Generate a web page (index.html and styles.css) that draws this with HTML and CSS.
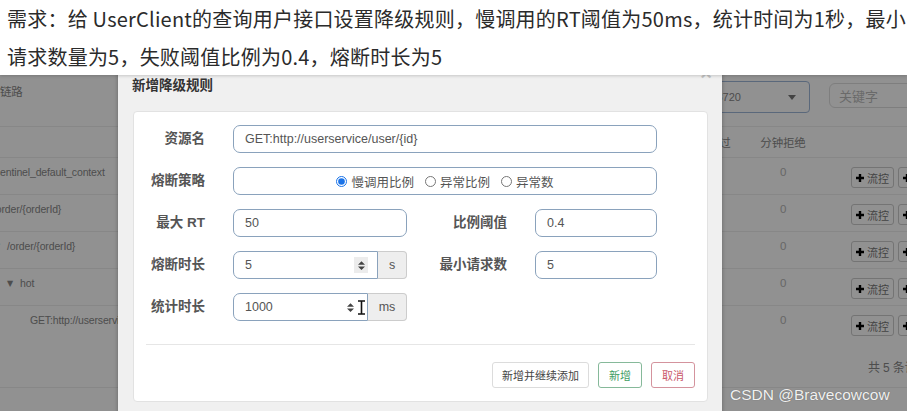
FILE: index.html
```html
<!DOCTYPE html>
<html lang="zh-CN">
<head>
    <meta charset="UTF-8">
    <meta name="viewport" content="width=device-width, initial-scale=1.0">
    <title>新增降级规则</title>
    <link rel="stylesheet" href="styles.css">
</head>
<body>
    <div class="note">需求：给 UserClient的查询用户接口设置降级规则，慢调用的RT阈值为50ms，统计时间为1秒，最小<br>请求数量为5，失败阈值比例为0.4，熔断时长为5</div>

    <div class="stage">
        <!-- dashboard page behind the dialog -->
        <div class="dash">
            <div class="toolbar">
                <div class="crumb">链路</div>
                <div class="machine">192.168.150.1:8720<span class="caret"></span></div>
                <input class="keyword" type="text" placeholder="关键字">
            </div>

            <div class="row head">
                <div class="cell"></div>
                <div class="cell num">分钟通过</div>
                <div class="cell num">分钟拒绝</div>
                <div class="cell"></div>
            </div>

            <div class="row">
                <div class="cell t0">sentinel_default_context</div>
                <div class="cell num zero">0</div>
                <div class="cell num zero">0</div>
                <div class="cell ops">
                    <button class="op"><svg viewBox="0 0 8 8"><path d="M4 0v8M0 4h8"/></svg>流控</button>
                    <button class="op"><svg viewBox="0 0 8 8"><path d="M4 0v8M0 4h8"/></svg>降级</button>
                </div>
            </div>
            <div class="row">
                <div class="cell t1">/order/{orderId}</div>
                <div class="cell num zero">0</div>
                <div class="cell num zero">0</div>
                <div class="cell ops">
                    <button class="op"><svg viewBox="0 0 8 8"><path d="M4 0v8M0 4h8"/></svg>流控</button>
                    <button class="op"><svg viewBox="0 0 8 8"><path d="M4 0v8M0 4h8"/></svg>降级</button>
                </div>
            </div>
            <div class="row">
                <div class="cell t2"><span class="tri">▼</span>/order/{orderId}</div>
                <div class="cell num zero">0</div>
                <div class="cell num zero">0</div>
                <div class="cell ops">
                    <button class="op"><svg viewBox="0 0 8 8"><path d="M4 0v8M0 4h8"/></svg>流控</button>
                    <button class="op"><svg viewBox="0 0 8 8"><path d="M4 0v8M0 4h8"/></svg>降级</button>
                </div>
            </div>
            <div class="row">
                <div class="cell t3"><span class="tri">▼</span>hot</div>
                <div class="cell num zero">0</div>
                <div class="cell num zero">0</div>
                <div class="cell ops">
                    <button class="op"><svg viewBox="0 0 8 8"><path d="M4 0v8M0 4h8"/></svg>流控</button>
                    <button class="op"><svg viewBox="0 0 8 8"><path d="M4 0v8M0 4h8"/></svg>降级</button>
                </div>
            </div>
            <div class="row last">
                <div class="cell t4">GET:http://userservice/user/{id}</div>
                <div class="cell num zero">0</div>
                <div class="cell num zero">0</div>
                <div class="cell ops">
                    <button class="op"><svg viewBox="0 0 8 8"><path d="M4 0v8M0 4h8"/></svg>流控</button>
                    <button class="op"><svg viewBox="0 0 8 8"><path d="M4 0v8M0 4h8"/></svg>降级</button>
                </div>
            </div>
            <div class="row foot">
                <div class="cell"></div>
                <div class="cell"></div>
                <div class="cell"></div>
                <div class="cell total">共 5 条记录</div>
            </div>
        </div>

        <div class="backdrop"></div>

        <!-- 新增降级规则 dialog -->
        <div class="modal">
            <span class="close">×</span>
            <div class="modal-title">新增降级规则</div>
            <div class="panel">
                <div class="form">
                    <label class="lbl">资源名</label>
                    <input class="ctl wide" type="text" value="GET:http://userservice/user/{id}">

                    <label class="lbl">熔断策略</label>
                    <div class="ctl wide radios">
                        <label class="opt"><input type="radio" name="grade" checked>慢调用比例</label>
                        <label class="opt"><input type="radio" name="grade">异常比例</label>
                        <label class="opt"><input type="radio" name="grade">异常数</label>
                    </div>

                    <label class="lbl">最大 RT</label>
                    <input class="ctl" type="text" value="50">
                    <label class="lbl">比例阈值</label>
                    <input class="ctl" type="text" value="0.4">

                    <label class="lbl">熔断时长</label>
                    <div class="group">
                        <div class="ctl numbox">
                            <span>5</span>
                            <span class="spin hl"><svg viewBox="0 0 8 12"><path d="M0 5L4 1L8 5ZM0 7L4 11L8 7Z"/></svg></span>
                        </div>
                        <span class="addon">s</span>
                    </div>
                    <label class="lbl">最小请求数</label>
                    <input class="ctl" type="text" value="5">

                    <label class="lbl">统计时长</label>
                    <div class="group">
                        <div class="ctl numbox tight">
                            <span>1000</span>
                            <span class="spin-wrap">
                                <span class="spin"><svg viewBox="0 0 8 12"><path d="M0 5L4 1L8 5ZM0 7L4 11L8 7Z"/></svg></span>
                                <svg class="ibeam" viewBox="0 0 9 15"><path d="M1 1h7M4.5 1v13M1 14h7"/></svg>
                            </span>
                        </div>
                        <span class="addon ms">ms</span>
                    </div>
                </div>

                <div class="divider"></div>

                <div class="actions">
                    <button class="btn">新增并继续添加</button>
                    <button class="btn ok">新增</button>
                    <button class="btn cancel">取消</button>
                </div>
            </div>
        </div>

        <div class="mark">CSDN @Bravecowcow</div>
    </div>
</body>
</html>
```

FILE: styles.css
```css
* {
    box-sizing: border-box;
}

body {
    margin: 0;
    width: 907px;
    height: 411px;
    overflow: hidden;
    background: #fff;
    font-family: "Liberation Sans", "Noto Sans CJK SC", sans-serif;
}

/* requirement text on top */
.note {
    position: relative;
    z-index: 3;
    height: 75px;
    padding: 0 7px;
    background: #fff;
    color: #2b2b2b;
    font-family: "Noto Sans CJK SC", sans-serif;
    font-size: 20px;
    line-height: 38px;
    letter-spacing: 0.22px;
    white-space: nowrap;
    box-shadow: 0 1px 3px rgba(0,0,0,0.18);
}

.stage {
    position: relative;
    height: 336px;
    overflow: hidden;
    background: #fff;
}

/* dashboard behind */
.dash {
    width: 1000px;
    margin-left: -40px;
    color: #888;
    font-size: 10.5px;
    letter-spacing: -0.15px;
}

.toolbar {
    display: flex;
    align-items: flex-start;
    height: 52px;
    border-bottom: 1px solid #eee;
}

.crumb {
    flex: 1;
    padding: 7px 0 0 40px;
    line-height: 20px;
    font-size: 11.5px;
}

.machine {
    display: flex;
    align-items: center;
    justify-content: space-between;
    width: 175px;
    height: 32px;
    margin-top: 6px;
    padding: 0 13px 0 7px;
    border: 1px solid #9fb8d8;
    border-radius: 4px;
    font-size: 11px;
    letter-spacing: 0;
    color: #888;
}

.caret {
    border-left: 4px solid transparent;
    border-right: 4px solid transparent;
    border-top: 5px solid #777;
}

.keyword {
    width: 131px;
    height: 25px;
    margin: 8px 0 0 19px;
    padding: 0 9px;
    border: 1px solid #ddd;
    border-radius: 6px;
    font: 13px "Noto Sans CJK SC", sans-serif;
    background: #fff;
}

.keyword::placeholder {
    color: #bbb;
}

.row {
    display: grid;
    grid-template-columns: 708px 80px 70px 1fr;
    height: 37px;
    border-bottom: 1px solid #eee;
}

.row.head {
    height: 31px;
    font-size: 11.5px;
}

.row.last {
    border-bottom: none;
}

.row.foot {
    height: 45px;
}

.cell {
    padding-top: 5px;
    line-height: 18px;
    white-space: nowrap;
}

.head .cell {
    padding-top: 7px;
}

.num {
    text-align: center;
    font-size: 11.5px;
}

.zero {
    color: #b5b5b5;
}

.t0 { padding-left: 35px; }
.t1 { padding-left: 33px; }
.t2 { padding-left: 34px; }
.t3 { padding-left: 47px; }
.t4 { padding-left: 70px; }

.tri {
    display: inline-block;
    width: 13px;
    font-family: "DejaVu Sans", sans-serif;
    font-size: 8px;
    vertical-align: 1px;
}

.ops {
    display: flex;
    gap: 4px;
    padding: 9px 0 0 33px;
}

.op {
    display: flex;
    align-items: center;
    gap: 3px;
    height: 21px;
    padding: 0 4px;
    border: 1px solid #ccc;
    border-radius: 3px;
    background: #fff;
    color: #777;
    font: 11px "Noto Sans CJK SC", sans-serif;
}

.op svg {
    width: 8px;
    height: 8px;
    stroke: #000;
    stroke-width: 2.4;
}

.total {
    padding: 16px 0 0 50px;
    font-size: 12px;
}

.backdrop {
    position: absolute;
    inset: 0;
    z-index: 1;
    background: rgba(0,0,0,0.43);
}

/* dialog */
.modal {
    position: absolute;
    z-index: 2;
    left: 118px;
    top: -16px;
    width: 604px;
    height: 400px;
    background: #f0f0f0;
    box-shadow: 0 0 4px rgba(0,0,0,0.3);
}

.close {
    position: absolute;
    top: 4px;
    right: 10px;
    font-size: 20px;
    line-height: 20px;
    font-weight: bold;
    color: #c4c4c4;
}

.modal-title {
    padding: 15px 14px 0;
    line-height: 20px;
    font-family: "Noto Sans CJK SC", sans-serif;
    font-size: 13.5px;
    font-weight: bold;
    color: #333;
}

.panel {
    margin: 17px 14px 0 15px;
    padding: 13px 0;
    background: #fff;
    border: 1px solid #e2e2e2;
    border-radius: 4px;
}

.form {
    display: grid;
    grid-template-columns: 71px 174px 72px 122px;
    grid-auto-rows: 28px;
    column-gap: 28px;
    row-gap: 14px;
}

.lbl {
    text-align: right;
    line-height: 28px;
    font-size: 13.5px;
    font-weight: bold;
    color: #555;
    white-space: nowrap;
}

.ctl {
    height: 28px;
    padding: 0 11px;
    border: 1px solid #8aa2bc;
    border-radius: 7px;
    background: #fff;
    font: 12.5px "Liberation Sans", "Noto Sans CJK SC", sans-serif;
    color: #555;
    outline: none;
}

.wide {
    grid-column: 2 / 5;
}

.radios {
    display: flex;
    align-items: center;
    justify-content: center;
}

.opt {
    display: flex;
    align-items: center;
    margin-right: 11px;
    font-size: 12.5px;
    color: #555;
}

.opt:last-child {
    margin-right: 0;
}

.opt input {
    width: 11px;
    height: 11px;
    margin: 0 4px 0 0;
    accent-color: #1a73e8;
}

.group {
    display: flex;
}

.numbox {
    flex: 1;
    display: flex;
    align-items: center;
    justify-content: space-between;
    padding-right: 9px;
    border-radius: 7px 0 0 7px;
}

.numbox.tight {
    padding-right: 1px;
}

.spin {
    display: flex;
    align-items: center;
    justify-content: center;
    width: 14px;
    height: 16px;
}

.spin.hl {
    background: #ececec;
}

.spin svg {
    width: 7px;
    height: 11px;
    fill: #444;
}

.spin-wrap {
    display: flex;
    align-items: center;
}

.ibeam {
    width: 9px;
    height: 15px;
    stroke: #111;
    stroke-width: 1.6;
    fill: none;
}

.addon {
    width: 29px;
    height: 28px;
    line-height: 26px;
    text-align: center;
    border: 1px solid #ccc;
    border-left: none;
    border-radius: 0 4px 4px 0;
    background: #eee;
    color: #555;
    font-size: 12.5px;
}

.addon.ms {
    width: 39px;
}

.divider {
    height: 1px;
    margin: 23px 12px 0;
    background: #e6e6e6;
}

.actions {
    display: flex;
    justify-content: flex-end;
    gap: 9px;
    margin: 17px 12px 0;
}

.btn {
    min-width: 44px;
    height: 26px;
    padding: 0 9px;
    border: 1px solid #dcdcdc;
    border-radius: 3px;
    background: #fff;
    color: #444;
    font: 11px "Noto Sans CJK SC", sans-serif;
}

.btn.ok {
    border-color: #86b99a;
    color: #3f9d63;
}

.btn.cancel {
    border-color: #d4939d;
    color: #c9586a;
}

.mark {
    position: absolute;
    z-index: 4;
    left: 730px;
    top: 310px;
    font-size: 15.5px;
    line-height: 20px;
    color: rgba(255,255,255,0.92);
    text-shadow: 0 0 1px rgba(0,0,0,0.35);
}
```
